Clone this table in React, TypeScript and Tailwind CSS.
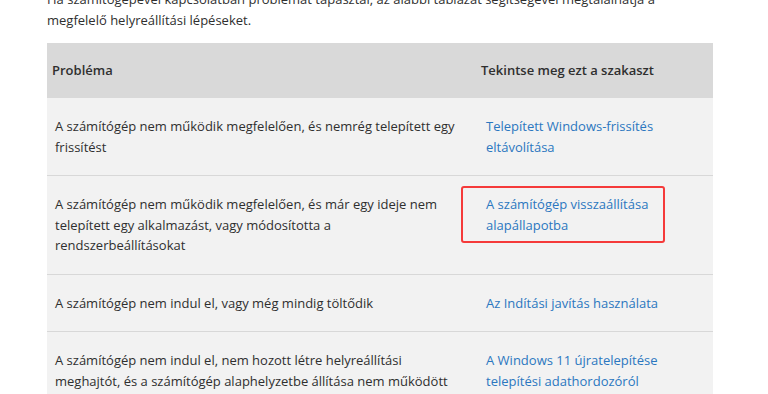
const rows = [
  {
    problem: "A számítógép nem működik megfelelően, és nemrég telepített egy frissítést",
    link: "Telepített Windows-frissítés eltávolítása",
  },
  {
    problem:
      "A számítógép nem működik megfelelően, és már egy ideje nem telepített egy alkalmazást, vagy módosította a rendszerbeállításokat",
    link: "A számítógép visszaállítása alapállapotba",
    highlight: true,
  },
  {
    problem: "A számítógép nem indul el, vagy még mindig töltődik",
    link: "Az Indítási javítás használata",
  },
  {
    problem:
      "A számítógép nem indul el, nem hozott létre helyreállítási meghajtót, és a számítógép alaphelyzetbe állítása nem működött",
    link: "A Windows 11 újratelepítése telepítési adathordozóról",
  },
];

export default function App() {
  return (
    <div className="h-[394px] overflow-hidden bg-white font-['Open_Sans',sans-serif] text-[13px] text-[#2f2f2f]">
      <div className="mt-[-11px] pl-[47px] pr-[55px]">
        <p className="leading-[21px]">
          Ha számítógépével kapcsolatban problémát tapasztal, az alábbi táblázat segítségével megtalálhatja a
          megfelelő helyreállítási lépéseket.
        </p>

        <table className="mt-[12px] w-[666px] border-collapse">
          <thead>
            <tr className="bg-[#d9d9d9]">
              <th className="w-[431px] py-[17px] pl-[5px] text-left font-semibold leading-[21px]">Probléma</th>
              <th className="py-[17px] pl-[3px] text-left font-semibold leading-[21px]">
                Tekintse meg ezt a szakaszt
              </th>
            </tr>
          </thead>
          <tbody>
            {rows.map((r) => (
              <tr key={r.link} className="border-b border-[#d8d8d8] bg-[#f2f2f2] align-top">
                <td className="py-[18px] pl-[8px] pr-[20px] leading-[20.5px]">{r.problem}</td>
                <td className="py-[18px] pl-[8px] pr-[40px] leading-[20.5px] text-[#2b77c0]">
                  {r.highlight ? (
                    <div className="relative">
                      <span>{r.link}</span>
                      {/* red highlight frame around the link */}
                      <span className="absolute left-[-25px] top-[-8px] bottom-[-8px] w-[204px] rounded-[3px] border-2 border-[#f53a3a]" />
                    </div>
                  ) : (
                    r.link
                  )}
                </td>
              </tr>
            ))}
          </tbody>
        </table>
      </div>
    </div>
  );
}
